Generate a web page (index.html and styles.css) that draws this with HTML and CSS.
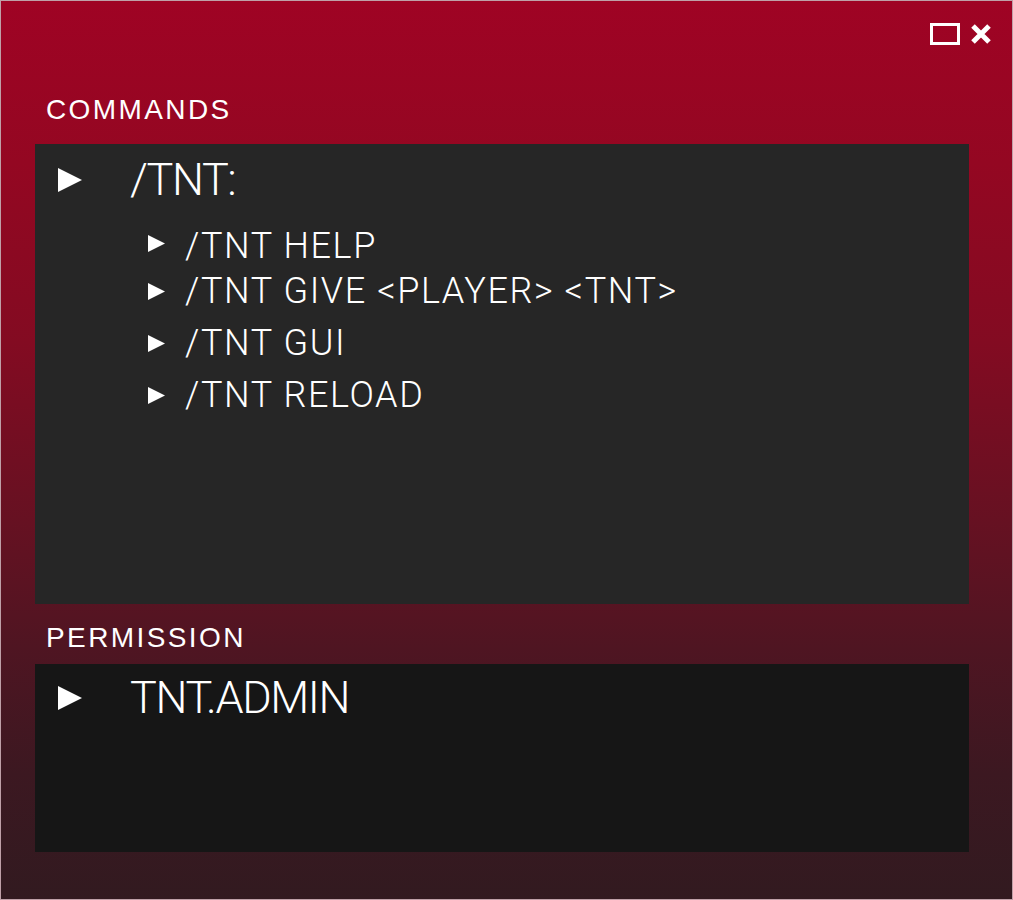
FILE: index.html
```html
<!DOCTYPE html>
<html>
<head>
  <title>TNT Commands</title>
  <link rel="stylesheet" href="styles.css">
</head>
<body>

  <div class="window">

    <div class="titlebar">
      <svg class="win-btn" width="30" height="22" viewBox="0 0 30 22">
        <rect x="1.5" y="1.5" width="27" height="19" fill="none" stroke="#fff" stroke-width="3"/>
      </svg>
      <svg class="win-btn" width="22" height="20" viewBox="0 0 22 20">
        <path d="M3 2 L19 18 M19 2 L3 18" stroke="#fff" stroke-width="5"/>
      </svg>
    </div>

    <h2 class="heading">COMMANDS</h2>
    <div class="panel commands">
      <div class="row">
        <svg class="arrow" width="24" height="24" viewBox="0 0 24 24"><path d="M0 0 L24 12 L0 24 Z" fill="#fff"/></svg>
        <span>/TNT:</span>
      </div>
      <ul class="sub">
        <li><svg class="arrow-sm up" width="17" height="17" viewBox="0 0 17 17"><path d="M0 0 L17 8.5 L0 17 Z" fill="#fff"/></svg>/TNT HELP</li>
        <li><svg class="arrow-sm" width="17" height="17" viewBox="0 0 17 17"><path d="M0 0 L17 8.5 L0 17 Z" fill="#fff"/></svg>/TNT GIVE &lt;PLAYER&gt; &lt;TNT&gt;</li>
        <li class="gap"><svg class="arrow-sm" width="17" height="17" viewBox="0 0 17 17"><path d="M0 0 L17 8.5 L0 17 Z" fill="#fff"/></svg>/TNT GUI</li>
        <li class="gap"><svg class="arrow-sm" width="17" height="17" viewBox="0 0 17 17"><path d="M0 0 L17 8.5 L0 17 Z" fill="#fff"/></svg>/TNT RELOAD</li>
      </ul>
    </div>

    <h2 class="heading perm-heading">PERMISSION</h2>
    <div class="panel permission">
      <div class="row">
        <svg class="arrow" width="24" height="24" viewBox="0 0 24 24"><path d="M0 0 L24 12 L0 24 Z" fill="#fff"/></svg>
        <span>TNT.ADMIN</span>
      </div>
    </div>

  </div>

</body>
</html>
```

FILE: styles.css
```css
body {
  margin: 0;
  font-family: Roboto, "Liberation Sans", sans-serif;
  color: #fff;
}
.window {
  width: 1013px;
  height: 900px;
  box-sizing: border-box;
  border: 1px solid #bfa0a8;
  padding: 22px 43px 0 34px;
  background: linear-gradient(to bottom, #9f0324 0%, #940722 18%, #830b22 38%, #661122 58%, #4f1522 72%, #3c1821 86%, #321a20 100%);
}
.titlebar {
  display: flex;
  justify-content: flex-end;
  align-items: center;
  gap: 10px;
  height: 22px;
  margin-right: -23px;
}
.heading {
  margin: 51px 0 0 11px;
  font-family: "Liberation Sans", Arial, sans-serif;
  font-weight: normal;
  font-size: 28px;
  letter-spacing: 2.4px;
  line-height: 28px;
}
.perm-heading {
  margin-top: 20px;
}
.panel {
  margin-top: 20px;
  padding: 13px 0 0 23px;
  box-sizing: border-box;
}
.commands {
  background: #262626;
  height: 460px;
}
.permission {
  background: #161616;
  height: 188px;
  margin-top: 12px;
  padding-top: 11px;
}
.row {
  display: flex;
  align-items: center;
  height: 46px;
  font-size: 45px;
  font-weight: 300;
  letter-spacing: -1.4px;
  line-height: 46px;
}
.arrow {
  margin-right: 48px;
}
.sub {
  list-style: none;
  margin: 21px 0 0 90px;
  padding: 0;
}
.sub li {
  display: flex;
  align-items: center;
  font-size: 36px;
  font-weight: 300;
  letter-spacing: 1.6px;
  line-height: 45px;
  height: 45px;
}
.sub li.gap {
  margin-top: 7px;
}
.arrow-sm {
  margin-right: 20px;
}
.arrow-sm.up {
  margin-bottom: 7px;
}
```
